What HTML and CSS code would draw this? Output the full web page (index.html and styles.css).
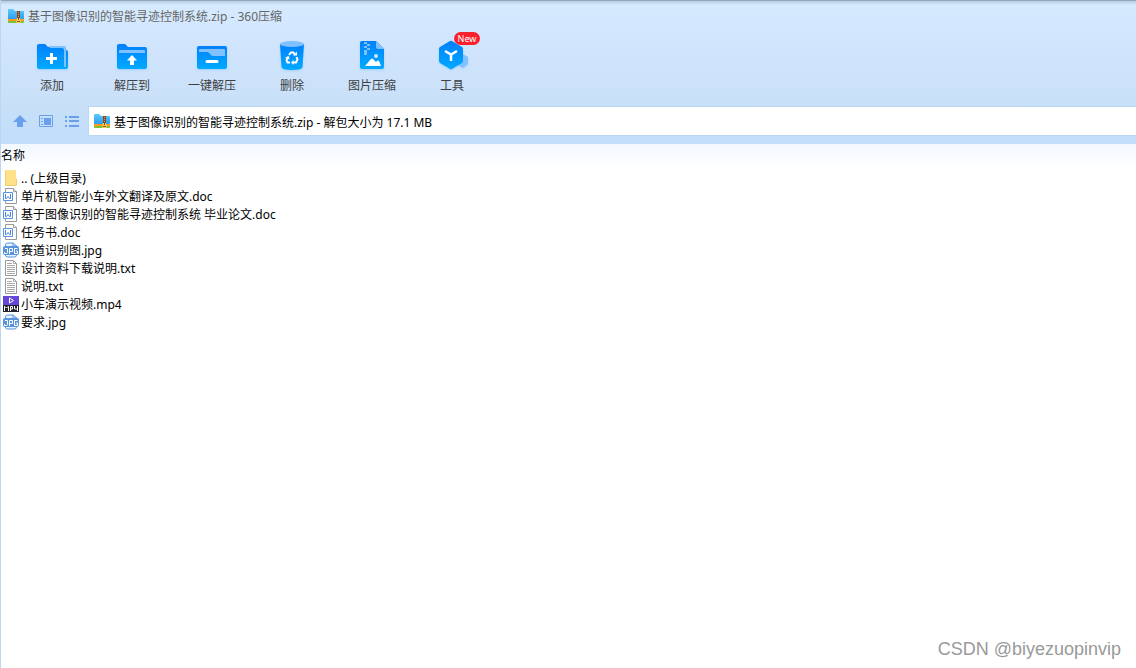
FILE: index.html
```html
<!DOCTYPE html>
<html lang="zh-CN">
<head>
<meta charset="utf-8">
<meta name="viewport" content="width=device-width, initial-scale=1">
<title>基于图像识别的智能寻迹控制系统.zip - 360压缩</title>
<link rel="stylesheet" href="styles.css">
</head>
<body>
<svg class="defs" aria-hidden="true">
  <defs>
    <linearGradient id="blue" x1="0" y1="0" x2="0" y2="1"><stop offset="0" stop-color="#0080fc"/><stop offset="1" stop-color="#00aaff"/></linearGradient>
    <linearGradient id="sky" x1="0" y1="0" x2="0" y2="1"><stop offset="0" stop-color="#5cc8fc"/><stop offset="1" stop-color="#2a9af0"/></linearGradient>
    <symbol id="archive" viewBox="0 0 16 14">
      <path d="M0 1q0-1 1-1h4l2 2h8q1 0 1 1v8H0z" fill="url(#sky)"/>
      <path d="M0 10h16v2H0z" fill="#ff9a1c"/><path d="M0 12h16v1q0 1-1 1H1q-1 0-1-1z" fill="#7cc23c"/>
      <path d="M9 2h3v8H9z" fill="#8a4a20"/><path d="M10 3h1v1h-1zm0 2h1v1h-1zm0 2h1v1h-1z" fill="#d99a58"/>
      <path d="M9 9h3l1 4-1 1H9l-1-1z" fill="#ffd058"/><path d="M10 8h1v3h-1zm-1 4h3v1H9z" fill="#8a4a20"/>
    </symbol>
    <symbol id="doc" viewBox="0 0 16 16">
      <path d="M2.500.5h8l3 3v12h-11z" fill="#fff" stroke="#9a9a9a"/><path d="M10.500.5v3h3" fill="#eee" stroke="#9a9a9a"/>
      <path d="M.5 4.500h9v8h-9z" fill="#fff" stroke="#5b93e0"/><path d="M2.500 6v4.500h1l1.500-2 1.500 2h1V6" fill="none" stroke="#4384dc"/>
    </symbol>
    <symbol id="jpg" viewBox="0 0 16 16">
      <path d="M2.500 5V3q0-2 2-2h6l3 3v1M2.500 12v1q0 2 2 2h7q2 0 2-2v-1" fill="#edf4ff" stroke="#5793df"/><path d="M10 1v3h3.500" fill="none" stroke="#5793df"/>
      <rect y="4" width="16" height="9" rx="2" fill="#5793df"/>
      <path d="M2 6.500h2.500v4q0 1-1 1h-2V10M6.500 12V6.500h3v3h-3M14.500 6.500h-3v5h3v-2.500H13" fill="none" stroke="#fff"/>
    </symbol>
    <symbol id="txt" viewBox="0 0 16 16">
      <path d="M2.500.5h8l3 3v12h-11z" fill="#fff" stroke="#999"/><path d="M10.500.5v3h3M4 3.500h5M4 5.500h8M4 7.500h8M4 9.500h8M4 11.500h8M4 13.500h8" fill="none" stroke="#aaa"/>
    </symbol>
    <symbol id="mp4" viewBox="0 0 16 16">
      <path d="M0 0h16v9H0z" fill="#6548d8"/><path d="M0 9h16v7H0z" fill="#22222c"/><path d="M6.500 2v5l4-2.500z" fill="none" stroke="#fff"/>
      <path d="M1.500 15v-4.500h.5L3.500 12 5 10.500h.5V15M7.500 15v-4.500h2v2.500h-2M11.500 10v3h3.500M14.500 10v5" fill="none" stroke="#fff"/>
    </symbol>
    <symbol id="folder" viewBox="0 0 16 16">
      <path d="M3 0h9q1 0 1 1v8h1v6q0 1-1 1H3q-1 0-1-1V1q0-1 1-1z" fill="#ffe18a"/><path d="M2.500 1v14q0 .500.500.500h10q.500 0 .500-.500V9.500h-1" fill="none" stroke="#efcf6b"/>
    </symbol>
  </defs>
</svg>

<main class="window">
  <header class="chrome">
    <div class="titlebar">
      <svg class="archive-icon"><use href="#archive"/></svg>
      <h1 class="title">基于图像识别的智能寻迹控制系统.zip - 360压缩</h1>
    </div>

    <nav class="toolbar" aria-label="工具栏">
      <button class="tool" type="button">
        <svg class="tool-icon" viewBox="0 0 36 36">
          <path d="M3 6q0-2 2-2h6l3 3h15q2 0 2 2v1h1q2 0 2 2v15q0 2-2 2H5q-2 0-2-2z" fill="url(#blue)"/><path d="M15 6h15q2 0 2 2v19h-2V10q0-2-2-2H16z" fill="#80c2ff"/>
          <path d="M12 18.500h11M17.500 13v11" stroke="#fff" stroke-width="3"/>
        </svg><span>添加</span>
      </button>
      <button class="tool" type="button">
        <svg class="tool-icon" viewBox="0 0 36 36">
          <path d="M3 6q0-2 2-2h6l3 3h17q2 0 2 2v18q0 2-2 2H5q-2 0-2-2z" fill="url(#blue)"/><path d="M5 13v-2q0-1 1-1h24q1 0 1 1v2z" fill="#80c2ff"/>
          <path d="M18 15l5 5.500h-3V25h-4v-4.500h-3z" fill="#fff"/>
        </svg><span>解压到</span>
      </button>
      <button class="tool" type="button">
        <svg class="tool-icon" viewBox="0 0 36 36">
          <rect x="3" y="6" width="30" height="23" rx="2" fill="url(#blue)"/><path d="M5 12v-2q0-1 1-1h24q1 0 1 1v6H18l-4-4z" fill="#80c2ff"/>
          <path d="M13 21.500h10" stroke="#fff" stroke-width="3" stroke-linecap="round"/>
        </svg><span>一键解压</span>
      </button>
      <button class="tool" type="button">
        <svg class="tool-icon" viewBox="0 0 36 36">
          <path d="M6 4h24l-1.500 23q0 3-10.500 3T7.500 27z" fill="url(#blue)"/><ellipse cx="18" cy="4" rx="12" ry="3" fill="#80c2ff"/>
          <g fill="none" stroke="#fff" stroke-width="2"><path d="M15 15l2-2.500h2.500l1.500 2.500M22.500 17l1 2.500-1.500 3h-3M16 22.500h-2.500L12.500 20l1.500-3"/></g>
          <path d="M19 15.500h4v-4zM19.500 20v5L17 22.500zM11 17.500l4-1.500.500 3.500z" fill="#fff"/>
        </svg><span>删除</span>
      </button>
      <button class="tool" type="button">
        <svg class="tool-icon" viewBox="0 0 36 36">
          <path d="M8 1h14l8 8v18q0 2-2 2H8q-2 0-2-2V3q0-2 2-2z" fill="url(#blue)"/><path d="M22 1l8 8h-6q-2 0-2-2z" fill="#80c2ff"/>
          <path d="M10 2h3v2h-3zm3 2h3v2h-3zm-3 2h3v2h-3zm3 2h3v2h-3zm-3 2h3v5h-3z" fill="#80c2ff"/>
          <circle cx="22" cy="16" r="2" fill="#cce6ff"/><path d="M11 26l6-7q1-1 2 0l3 3 1-1q1-1 2 0l2 5z" fill="#fff"/>
        </svg><span>图片压缩</span>
      </button>
      <button class="tool" type="button">
        <svg class="tool-icon" viewBox="0 0 36 36">
          <path d="M29 14l5 3v7l-5 4-5-3z" fill="#80c2ff"/><path d="M16 1q1-.500 2 0l10 6q1 .500 1 2v12q0 1-1 2l-10 6q-1 .500-2 0L6 23q-1-1-1-2V9q0-1.500 1-2z" fill="url(#blue)"/>
          <path d="M11 11l6 3.500 6-3.500M17 14.500V21" fill="none" stroke="#fff" stroke-width="2.500"/>
        </svg><span>工具</span><span class="badge">New</span>
      </button>
    </nav>

    <div class="location">
      <div class="location-buttons">
        <button class="mini" type="button" aria-label="上级目录"><svg viewBox="0 0 16 16"><path d="M8 2l7 7h-4v5H5V9H1z" fill="#699fec"/></svg></button>
        <button class="mini" type="button" aria-label="预览"><svg viewBox="0 0 16 16"><path d="M1.500 2.500h13v11h-13z" fill="none" stroke="#699fec"/><path d="M6 5h7v7H6zM3 5h2v1H3zm0 3h2v1H3zm0 3h2v1H3z" fill="#699fec"/></svg></button>
        <button class="mini" type="button" aria-label="列表"><svg viewBox="0 0 16 16"><path d="M1 3h2v2H1zm4 0h10v2H5zM1 7h2v2H1zm4 0h10v2H5zM1 12h2v2H1zm4 0h10v2H5z" fill="#699fec"/></svg></button>
      </div>
      <label class="address">
        <svg class="archive-icon"><use href="#archive"/></svg>
        <input class="address-input" type="text" aria-label="地址" value="基于图像识别的智能寻迹控制系统.zip - 解包大小为 17.1 MB">
      </label>
    </div>
  </header>

  <table class="files">
    <thead><tr><th scope="col">名称</th></tr></thead>
    <tbody>
      <tr><td><div class="file"><svg class="file-icon"><use href="#folder"/></svg><span>.. (上级目录)</span></div></td></tr>
      <tr><td><div class="file"><svg class="file-icon"><use href="#doc"/></svg><span>单片机智能小车外文翻译及原文.doc</span></div></td></tr>
      <tr><td><div class="file"><svg class="file-icon"><use href="#doc"/></svg><span>基于图像识别的智能寻迹控制系统 毕业论文.doc</span></div></td></tr>
      <tr><td><div class="file"><svg class="file-icon"><use href="#doc"/></svg><span>任务书.doc</span></div></td></tr>
      <tr><td><div class="file"><svg class="file-icon"><use href="#jpg"/></svg><span>赛道识别图.jpg</span></div></td></tr>
      <tr><td><div class="file"><svg class="file-icon"><use href="#txt"/></svg><span>设计资料下载说明.txt</span></div></td></tr>
      <tr><td><div class="file"><svg class="file-icon"><use href="#txt"/></svg><span>说明.txt</span></div></td></tr>
      <tr><td><div class="file"><svg class="file-icon"><use href="#mp4"/></svg><span>小车演示视频.mp4</span></div></td></tr>
      <tr><td><div class="file"><svg class="file-icon"><use href="#jpg"/></svg><span>要求.jpg</span></div></td></tr>
    </tbody>
  </table>

  <footer class="credit">CSDN @biyezuopinvip</footer>
</main>
</body>
</html>
```

FILE: styles.css
```css
* { box-sizing: border-box; }

body {
  margin: 0;
  font: 12px/18px "Noto Sans", "Noto Sans CJK SC", sans-serif;
  color: #000;
  background: #fff;
}

button, input { font: inherit; color: inherit; border: 0; padding: 0; background: none; }
svg { display: block; flex: none; }
.defs { position: absolute; width: 0; height: 0; }

.window {
  display: flex;
  flex-direction: column;
  min-height: 100vh;
  border-left: 1px solid #bad7f5;
}

.chrome {
  background:
    linear-gradient(#94a8bb 0 1px, #b5cbdf 1px, transparent 5px),
    linear-gradient(#d6ebff 0, #d0e5fd 50px, #c8e0f8 106px, #c3defa 135px);
  padding-bottom: 8px;
}

.titlebar { display: flex; align-items: center; gap: 4px; height: 32px; padding-left: 7px; }
.title { margin: 0; padding-top: 2px; font-size: 12px; font-weight: 400; color: #666; }
.archive-icon { width: 16px; height: 14px; }

.toolbar { display: flex; height: 74px; padding: 8px 0 0 11px; }
.tool {
  position: relative;
  display: flex;
  flex-direction: column;
  align-items: center;
  justify-content: flex-start;
  gap: 1px;
  width: 80px;
  height: 60px;
  color: #404040;
}
.tool-icon { width: 36px; height: 36px; filter: drop-shadow(0 1px 1px #0080fc33); }
.badge {
  position: absolute;
  top: -8px;
  left: 42px;
  width: 26px;
  height: 13px;
  border-radius: 7px;
  background: #fa202e;
  color: #fff;
  font-size: 9px;
  line-height: 13px;
}

.location { display: flex; }
.location-buttons { display: flex; align-items: center; gap: 10px; padding: 0 8px 0 11px; }
.mini { width: 16px; height: 16px; }
.address {
  flex: 1;
  display: flex;
  align-items: center;
  gap: 4px;
  height: 30px;
  padding-left: 5px;
  border: solid #bad7f5;
  border-width: 1px 0 1px 1px;
  background: #fff;
}
.address-input { flex: 1; min-width: 0; height: 20px; padding-top: 1px; outline: 0; }

.files { width: 100%; border-collapse: collapse; }
.files th {
  height: 25px;
  padding: 0 0 2px;
  text-align: left;
  font-weight: 400;
  background: linear-gradient(#f2f8fe, #fff);
}
.files td { padding: 0; }
.file { display: flex; align-items: center; gap: 2px; height: 18px; padding-left: 2px; }
.file span { padding-top: 2px; }
.file-icon { width: 16px; height: 16px; }

.credit {
  margin-top: auto;
  padding: 0 15px 8px 0;
  text-align: right;
  font: 18px/22px "Liberation Sans", Arial, sans-serif;
  color: #999;
}
```
